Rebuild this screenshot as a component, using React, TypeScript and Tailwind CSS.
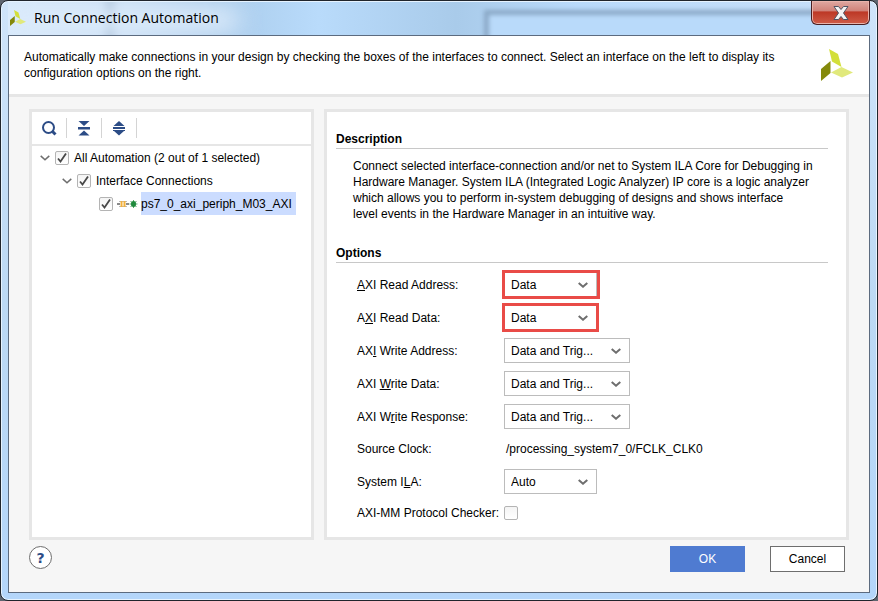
import React from "react";

function Logo({ className }: { className: string }) {
  return (
    <svg viewBox="0 0 32 32" className={className} aria-hidden="true">
      <path d="M8 0 L17 5 L20.500 18 L11 12.500 Z" fill="#d3df3a" />
      <path d="M0 20 L9.500 12 V24 L0 32 Z" fill="#84890b" />
      <path d="M10 23.500 L20.500 18 L32 23.500 L21 28.500 Z" fill="#e1e97c" />
    </svg>
  );
}

function Chevron({ className }: { className: string }) {
  return (
    <svg viewBox="0 0 10 6" className={className} fill="none" aria-hidden="true">
      <path d="M0.700 0.900 L5 4.700 L9.300 0.900" stroke="currentColor" />
    </svg>
  );
}

function TickBox({ id, checked }: { id: string; checked?: boolean }) {
  return (
    <span className="relative inline-flex shrink-0">
      <input
        id={id}
        type="checkbox"
        defaultChecked={checked}
        className="peer size-3.5 appearance-none rounded-xs border border-[#b4b4b4] bg-linear-to-b from-[#f4f4f4] to-white"
      />
      <svg
        viewBox="0 0 14 14"
        className="pointer-events-none absolute inset-0 hidden size-3.5 peer-checked:block"
        fill="none"
        aria-hidden="true"
      >
        <path d="M3 7.500 L5.500 10.500 L11 2.500" stroke="#484848" strokeWidth="1.800" />
      </svg>
    </span>
  );
}

function Combo({
  id,
  options,
  width,
  mark,
}: {
  id: string;
  options: string[];
  width: string;
  mark?: string;
}) {
  return (
    <div className={"relative h-[25px] " + width}>
      <select
        id={id}
        className="block size-full appearance-none rounded-none border border-[#bcbcbc] bg-white pl-1.5 text-black"
      >
        {options.map((o) => (
          <option key={o}>{o}</option>
        ))}
      </select>
      <Chevron className="pointer-events-none absolute top-2.5 right-[9px] w-2.5 stroke-2 text-[#6e6e6e]" />
      {mark && (
        <span className={"pointer-events-none absolute -inset-y-0.5 -left-0.5 border-3 border-[#e94b47] " + mark} />
      )}
    </div>
  );
}

function Section({ title, children }: { title: string; children: React.ReactNode }) {
  return (
    <section>
      <h2 className="border-b border-[#c8c8c8] pb-px font-bold">{title}</h2>
      {children}
    </section>
  );
}

const traffic = ["Data and Trig...", "Data", "Trigger"];

export default function App() {
  return (
    <div className="min-h-screen bg-[#5f6670]">
      <div className="flex min-h-screen flex-col rounded-lg border border-[#20252c] bg-linear-to-b from-[#cfe4fa] via-[#bcd9f4] to-[#b4d6fa] px-[7px] pb-[7px] font-['Liberation_Sans',Arial,sans-serif] text-xs leading-4 text-black shadow-[inset_0_0_0_1px_#e6f3ff]">
        <header className="relative flex h-[34px] items-center">
          <div className="absolute inset-x-0 top-px bottom-0 overflow-hidden bg-[linear-gradient(to_right,#d7e9fb_0%,#c8def3_14%,#a9cbea_24%,#b9dbfb_36%,#a9cbea_52%,#b9dafb_66%,#c9e0f8_100%)]">
            <div className="absolute -top-1 left-[98px] h-12 w-2 bg-[#9bb3cc] blur-xs" />
            <div className="absolute top-2 -right-4 left-[476px] h-12 border-5 border-[#8aa8c6] bg-[#b9dafa] blur-[2px]" />
            <div className="absolute top-1 -left-2 h-7 w-60 rounded-full bg-[#dcebfb] blur-md" />
          </div>
          <Logo className="relative ml-0.5 size-4" />
          <h1 className="relative ml-2 font-['Open_Sans',sans-serif] text-sm">Run Connection Automation</h1>
          <button
            aria-label="Close"
            className="absolute top-0 right-0 flex h-6 w-[59px] items-center justify-center rounded-b-md border border-t-0 border-[#4a1f22] bg-[linear-gradient(#dfa8a2_0%,#d0837a_42%,#bd3826_48%,#cf5c48_100%)] shadow-[inset_0_0_0_1px_#e9b3ab]"
          >
            <svg viewBox="0 0 16 14" className="h-3.5 w-4" aria-hidden="true">
              <path
                d="M1 0.500 H5.500 L8 3.500 L10.500 0.500 H15 L10.500 7 L15 13.500 H10.500 L8 10.500 L5.500 13.500 H1 L5.500 7 Z"
                fill="#f4f4f4"
                stroke="#4f5565"
              />
            </svg>
          </button>
        </header>

        <main className="flex flex-1 flex-col border border-[#5c6b7f] bg-[#f6f6f6]">
          <div className="flex justify-between border-b-3 border-[#e6e6e6] bg-white pt-[13px] pr-4 pb-[13px] pl-[15px]">
            <p className="max-w-[780px]">
              Automatically make connections in your design by checking the boxes of the interfaces to connect. Select
              an interface on the left to display its configuration options on the right.
            </p>
            <Logo className="size-8 shrink-0" />
          </div>

          <div className="flex flex-1 gap-2.5 px-5 pt-3">
            <div className="w-[285px] shrink-0 border-3 border-[#e6e6e6] bg-white">
              <div className="flex h-[34px] items-center border-b-2 border-[#e6e6e6] pl-[9px] text-[#2c4c86]">
                <button aria-label="Search" className="flex w-[26px] border-r border-[#d4d4d4] py-0.5">
                  <svg viewBox="0 0 16 16" className="size-4" fill="none" stroke="currentColor" aria-hidden="true">
                    <circle cx="7.500" cy="7.500" r="5.500" strokeWidth="2" />
                    <path d="M11.500 11.500 L14.500 14.500" strokeWidth="3" />
                  </svg>
                </button>
                <button aria-label="Collapse all" className="flex w-[35px] justify-center border-r border-[#d4d4d4] py-0.5">
                  <svg viewBox="0 0 16 16" className="size-4" fill="currentColor" aria-hidden="true">
                    <path d="M2.500 1 H13.500 L8 6 Z M2 7 H14 V9.500 H2 Z M2.500 15.500 H13.500 L8 10.500 Z" />
                  </svg>
                </button>
                <button aria-label="Expand all" className="flex w-[35px] justify-center border-r border-[#d4d4d4] py-0.5">
                  <svg viewBox="0 0 16 16" className="size-4" fill="currentColor" aria-hidden="true">
                    <path d="M2.500 6 H13.500 L8 1 Z M2 7 H14 V9 H2 Z M2 10 H14 V11 H13 L8 15.500 L3 11 H2 Z" />
                  </svg>
                </button>
              </div>
              <ul>
                <li className="flex h-[23px] items-center pl-2">
                  <Chevron className="mr-[5px] w-2.5 stroke-[1.500] text-[#6e6e6e]" />
                  <TickBox id="all" checked />
                  <label htmlFor="all" className="ml-[5px]">All Automation (2 out of 1 selected)</label>
                </li>
                <li className="flex h-[23px] items-center pl-[30px]">
                  <Chevron className="mr-[5px] w-2.5 stroke-[1.500] text-[#6e6e6e]" />
                  <TickBox id="interfaces" checked />
                  <label htmlFor="interfaces" className="ml-[5px]">Interface Connections</label>
                </li>
                <li className="flex h-[23px] items-center pl-[67px]">
                  <TickBox id="periph" checked />
                  <svg viewBox="0 0 21 10" className="mr-[3px] ml-1 h-2.5 w-[21px] shrink-0" fill="none" aria-hidden="true">
                    <path d="M0 5 H3 M9 5 H12" stroke="#8a8a8a" strokeWidth="2" />
                    <path d="M2 2.500 H10 M2 7.500 H10" stroke="#b9b9b9" />
                    <path d="M4.500 2 V8 M7.500 2 V8" stroke="#f3b13c" strokeWidth="2" />
                    <path d="M13.500 2 L19.500 8 M19.500 2 L13.500 8 M12.500 5 H20.500 M16.500 1 V9" stroke="#5aa86c" />
                    <ellipse cx="16.500" cy="5" rx="2.500" ry="3" fill="#1f8a3d" />
                  </svg>
                  <label htmlFor="periph" className="flex h-full items-center bg-[#cbdcff] pr-1">
                    ps7_0_axi_periph_M03_AXI
                  </label>
                </li>
              </ul>
            </div>

            <div className="min-w-0 flex-1 border-3 border-[#e6e6e6] bg-white pt-[19px] pr-[18px] pb-3 pl-[9px]">
              <Section title="Description">
                <p className="mt-[9px] mb-[23px] pl-[17px]">
                  Connect selected interface-connection and/or net to System ILA Core for Debugging in
                  <br />
                  Hardware Manager. System ILA (Integrated Logic Analyzer) IP core is a logic analyzer
                  <br />
                  which allows you to perform in-system debugging of designs and shows interface
                  <br />
                  level events in the Hardware Manager in an intuitive way.
                </p>
              </Section>
              <Section title="Options">
                <div className="mt-[9px] grid grid-cols-[147px_1fr] items-center gap-y-2 pl-[21px]">
                  <label htmlFor="ra"><u>A</u>XI Read Address:</label>
                  <Combo id="ra" options={["Data", "Trigger"]} width="w-[93px]" mark="-right-[3px]" />
                  <label htmlFor="rd">A<u>X</u>I Read Data:</label>
                  <Combo id="rd" options={["Data", "Trigger"]} width="w-[93px]" mark="-right-0.5" />
                  <label htmlFor="wa">AX<u>I</u> Write Address:</label>
                  <Combo id="wa" options={traffic} width="w-[126px]" />
                  <label htmlFor="wd">AXI <u>W</u>rite Data:</label>
                  <Combo id="wd" options={traffic} width="w-[126px]" />
                  <label htmlFor="wr">AXI W<u>r</u>ite Response:</label>
                  <Combo id="wr" options={traffic} width="w-[126px]" />
                  <span>Source Clock:</span>
                  <span className="py-1 pl-0.5">/processing_system7_0/FCLK_CLK0</span>
                  <label htmlFor="ila">System I<u>L</u>A:</label>
                  <Combo id="ila" options={["Auto"]} width="w-[93px]" />
                  <label htmlFor="mm" className="py-[3px] whitespace-nowrap">AXI-MM Protocol Checker:</label>
                  <TickBox id="mm" />
                </div>
              </Section>
            </div>
          </div>

          <footer className="flex items-start justify-between pt-1.5 pr-6 pb-5 pl-5">
            <button className="size-[23px] rounded-full border border-[#6e6e6e] bg-white font-['DejaVu_Sans',sans-serif] text-sm leading-5 font-bold text-[#2c4c86]">
              ?
            </button>
            <div className="flex gap-[25px]">
              <button className="h-[26px] w-[75px] bg-[#4f7bd1] text-white">OK</button>
              <button className="h-[26px] w-[75px] border border-[#6e6e6e] bg-white">Cancel</button>
            </div>
          </footer>
        </main>
      </div>
    </div>
  );
}
